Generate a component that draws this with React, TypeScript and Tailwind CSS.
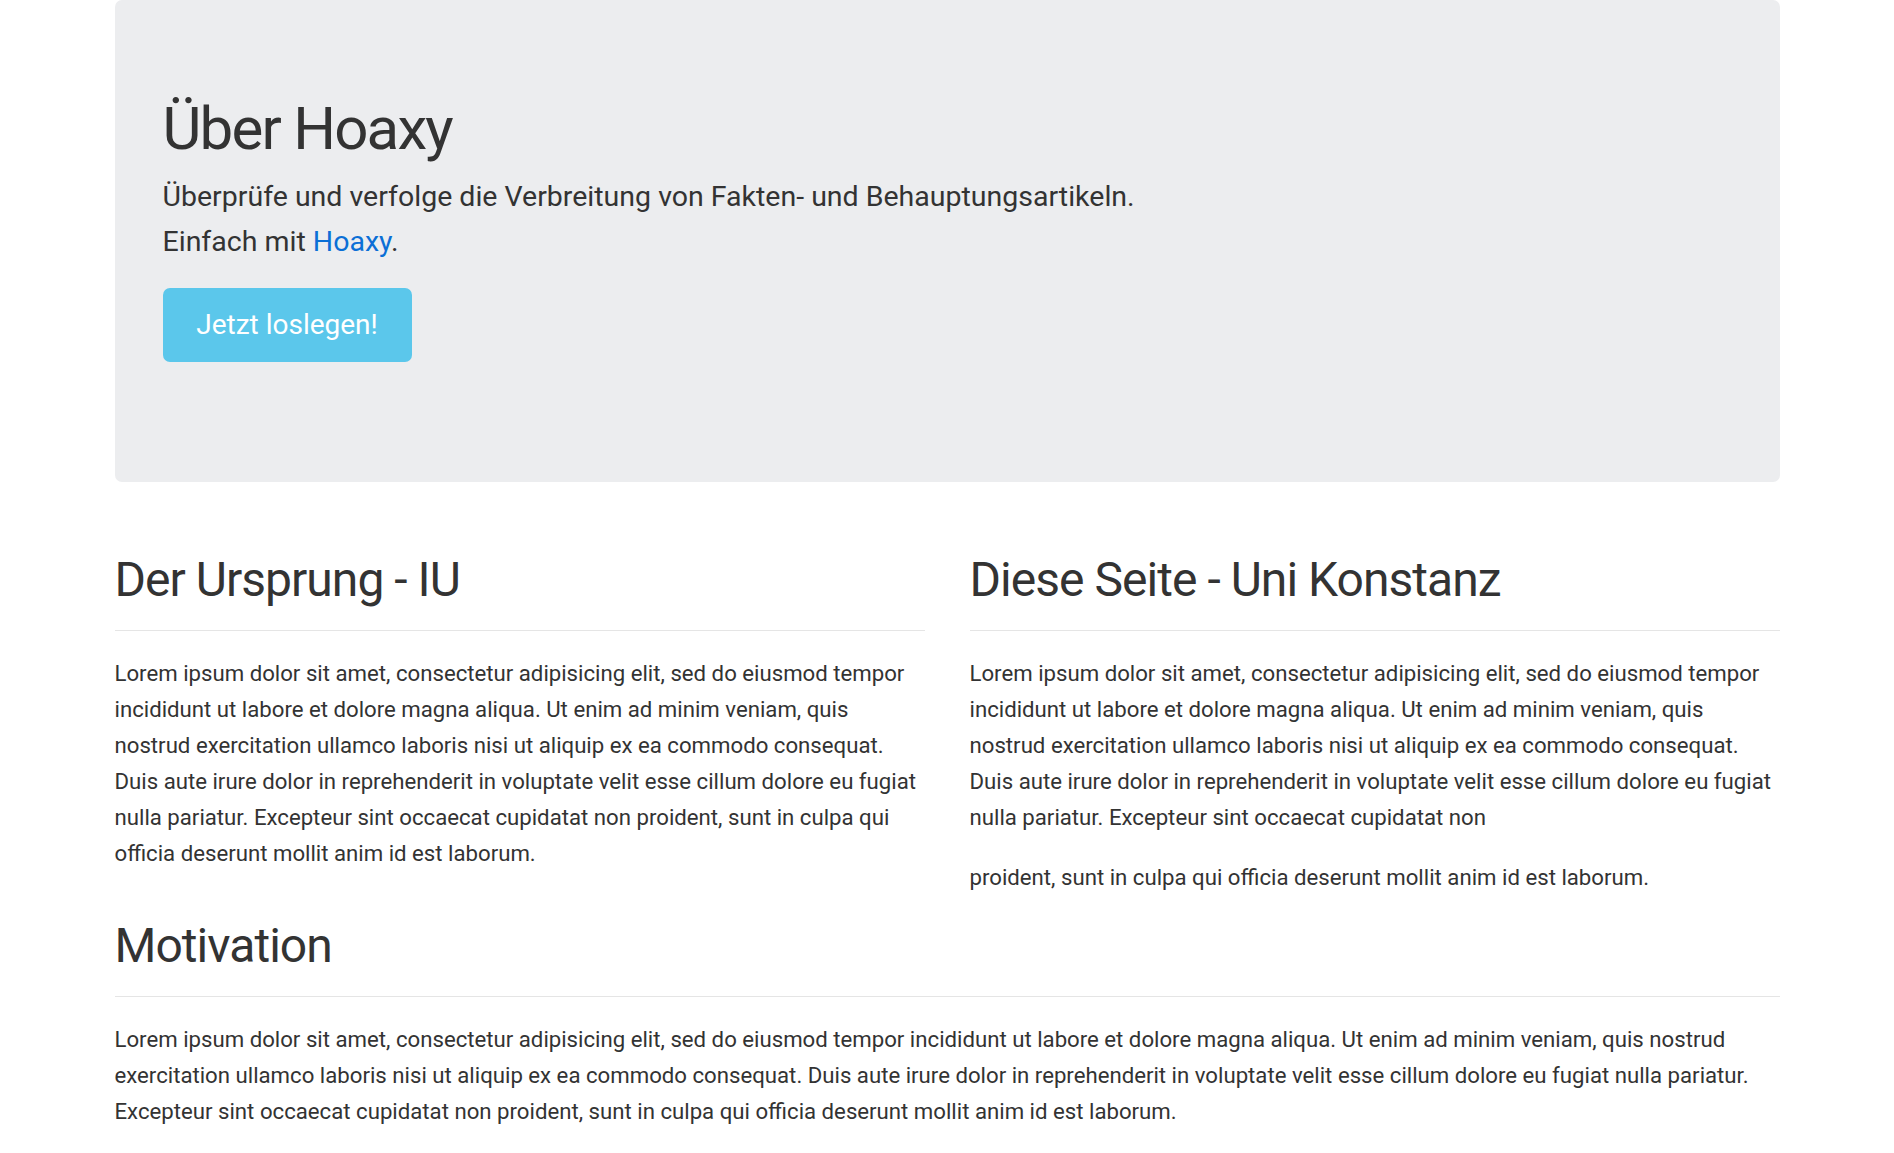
import React from 'react';

const LOREM_A =
  'Lorem ipsum dolor sit amet, consectetur adipisicing elit, sed do eiusmod tempor incididunt ut labore et dolore magna aliqua. Ut enim ad minim veniam, quis nostrud exercitation ullamco laboris nisi ut aliquip ex ea commodo consequat. Duis aute irure dolor in reprehenderit in voluptate velit esse cillum dolore eu fugiat nulla pariatur. Excepteur sint occaecat cupidatat non';
const LOREM_B = 'proident, sunt in culpa qui officia deserunt mollit anim id est laborum.';

const SectionTitle = ({ children }: { children: React.ReactNode }) => (
  <div className="border-b border-[#e5e5e5] pb-[21px]">
    <h2 className="text-[48px] leading-[58px] font-normal tracking-[-0.02em] text-[#333]">{children}</h2>
  </div>
);

const App = () => {
  return (
    <div className="min-h-screen bg-white font-['Roboto',_'Liberation_Sans',_sans-serif] text-[#333]">
      <div className="mx-auto w-[1665px] pb-16">
        {/* jumbotron */}
        <div className="rounded-[7px] bg-[#ecedef] px-12 pt-[93px] pb-[96px]">
          <h1 className="text-[60px] leading-[72px] font-normal tracking-[-0.03em]">Über Hoaxy</h1>
          <p className="mt-[9px] text-[28.5px] leading-[45px]">
            Überprüfe und verfolge die Verbreitung von Fakten- und Behauptungsartikeln.
            <br />
            Einfach mit{' '}
            <a href="#" className="text-[#0b6fd6]">
              Hoaxy
            </a>
            .
          </p>
          <p className="mt-[24px] mb-6">
            <a
              href="#"
              className="inline-flex h-[74px] w-[249px] items-center justify-center rounded-[7px] bg-[#5bc7eb] text-[28px] text-white"
            >
              Jetzt loslegen!
            </a>
          </p>
        </div>

        <div className="mt-[69px] grid grid-cols-2 gap-x-[45px]">
          <div>
            <SectionTitle>Der Ursprung - IU</SectionTitle>
            <p className="mt-6 text-[22.2px] leading-[36px]">
              {LOREM_A} {LOREM_B}
            </p>
          </div>
          <div>
            <SectionTitle>Diese Seite - Uni Konstanz</SectionTitle>
            <p className="mt-6 text-[22.2px] leading-[36px]">{LOREM_A}</p>
            <p className="mt-6 text-[22.2px] leading-[36px]">{LOREM_B}</p>
          </div>
        </div>

        <div className="mt-[22px]">
          <SectionTitle>Motivation</SectionTitle>
          <p className="mt-6 text-[22.2px] leading-[36px]">
            {LOREM_A} {LOREM_B}
          </p>
        </div>
      </div>
    </div>
  );
};

export default App;
